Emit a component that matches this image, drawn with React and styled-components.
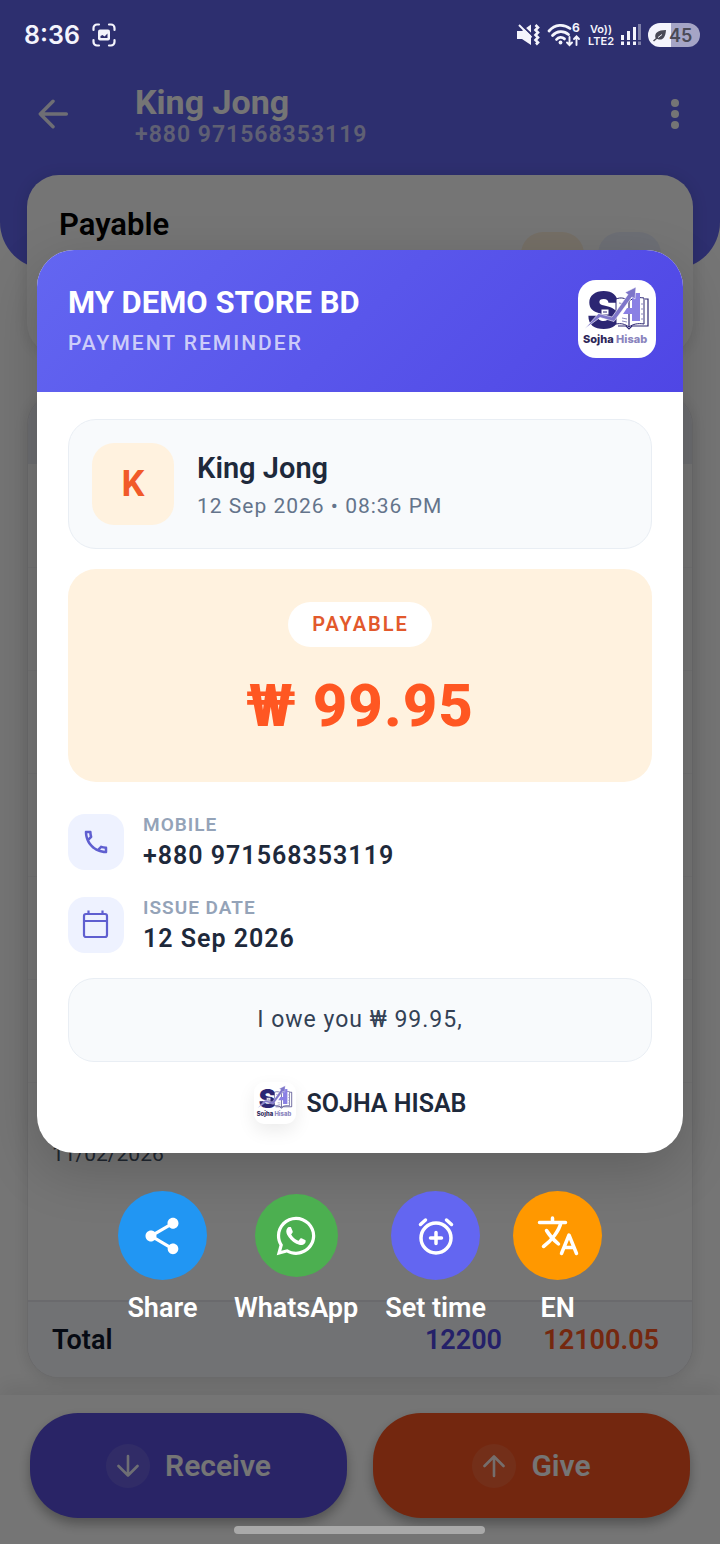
import React from "react"
import styled, { createGlobalStyle } from "styled-components"
import { MdOutlinePhone, MdShare } from "react-icons/md"
import { FaWhatsapp } from "react-icons/fa"

const GlobalStyle = createGlobalStyle`
  * {
    box-sizing: border-box;
  }

  body {
    margin: 0;
    background: #ffffff;
    font-family: Roboto, "Noto Sans", sans-serif;
  }

  button {
    padding: 0;
    border: 0;
    background: none;
    color: inherit;
    font: inherit;
    cursor: pointer;
  }

  svg {
    display: block;
    flex: none;
    overflow: visible;
  }

  h1, h2, p, dl, dd {
    margin: 0;
  }
`

const Screen = styled.div`
  position: relative;
  display: flex;
  flex-direction: column;
  min-height: 100vh;
  overflow: hidden;
`

/* status bar, drawn over the scrim */

const StatusBar = styled.div`
  position: absolute;
  z-index: 3;
  top: 0;
  left: 0;
  right: 0;
  display: flex;
  align-items: center;
  justify-content: space-between;
  height: 70px;
  padding: 0 20px 0 24px;
  color: #f4f4fc;
  font-family: Inter, sans-serif;
`

const StatusGroup = styled.div`
  display: flex;
  align-items: center;
  gap: ${props => props.$gap}px;
`

const Clock = styled.span`
  font-size: 25px;
  font-weight: 600;
`

const Volte = styled.span`
  font-size: 11px;
  font-weight: 600;
  line-height: 12px;
  text-align: center;
`

const Battery = styled.span`
  display: flex;
  align-items: center;
  gap: 2px;
  width: 52px;
  height: 24px;
  padding-left: 5px;
  border-radius: 12px;
  background: linear-gradient(90deg, #f4f4fc 45%, #a5a5c6 45%);
  color: #4a4a56;
  font-size: 18px;
  font-weight: 600;
`

const GestureBar = styled.div`
  position: absolute;
  z-index: 3;
  bottom: 10px;
  left: 50%;
  width: 251px;
  height: 8px;
  margin-left: -126px;
  border-radius: 4px;
  background: #a9a9a9;
`

/* customer page */

const PageHeader = styled.header`
  display: flex;
  align-items: flex-start;
  height: 269px;
  margin-bottom: -94px;
  padding: 84px 30px 0 37px;
  border-radius: 0 0 47px 47px;
  background: #6366f1;
  color: #ffffff;
`

const IconButton = styled.button`
  display: grid;
  place-items: center;
  height: 60px;
`

const HeaderText = styled.div`
  flex: 1;
  margin-left: 66px;
`

const HeaderName = styled.h1`
  font-size: 34px;
  font-weight: 700;
  line-height: 36px;
`

const HeaderPhone = styled.p`
  font-size: 23px;
  font-weight: 600;
  line-height: 30px;
  letter-spacing: 1px;
  opacity: 0.7;
`

const Panel = styled.section`
  position: relative;
  margin: 0 27px;
  border-radius: 32px;
  background: #ffffff;
  box-shadow: 0 2px 16px rgba(0, 0, 0, 0.12);
`

const BalancePanel = styled(Panel)`
  display: flex;
  justify-content: space-between;
  height: 180px;
  margin-bottom: 38px;
  padding: 32px;
`

const BalanceTitle = styled.h2`
  color: #000000;
  font-size: 31px;
  font-weight: 600;
  line-height: 36px;
`

const Tiles = styled.div`
  display: flex;
  gap: 14px;
  padding-top: 25px;
`

const Tile = styled.div`
  width: 63px;
  height: 63px;
  border-radius: 22px;
  background: ${props => props.$color};
`

const LedgerPanel = styled(Panel)`
  flex: 1;
  overflow: hidden;
  margin-bottom: 17px;
  border: 1px solid #e6e6ea;
`

const Ledger = styled.table`
  width: 100%;
  height: 100%;
  border-collapse: collapse;
  color: #475569;
  font-size: 21px;

  thead td {
    height: 70px;
    background: #ecedf4;
  }

  tbody td {
    height: 103px;
    border-bottom: 1px solid #f6f6f8;
    padding: 0 24px;
  }

  tbody tr:last-child td {
    height: 219px;
    padding-top: 56px;
    vertical-align: top;
    line-height: 30px;
  }

  tfoot th,
  tfoot td {
    height: 76px;
    padding: 0 33px 0 24px;
    border-top: 2px solid #e6e8ee;
    background: #f6f8fc;
    font-size: 27px;
    font-weight: 600;
    text-align: right;
  }

  tfoot td + td {
    padding-left: 0;
  }

  tfoot th {
    color: #0f172a;
    text-align: left;
  }
`

const TotalCell = styled.td`
  width: ${props => props.$width}px;
  color: ${props => props.$color};
`

const BottomBar = styled.footer`
  display: flex;
  gap: 26px;
  padding: 18px 30px 26px;
  background: #ffffff;
  box-shadow: 0 -8px 20px rgba(0, 0, 0, 0.08);
`

const BottomButton = styled.button`
  display: flex;
  flex: 1;
  align-items: center;
  justify-content: center;
  gap: 15px;
  height: 105px;
  border-radius: 48px;
  background: ${props => props.$color};
  box-shadow: 0 6px 12px rgba(0, 0, 0, 0.3);
  color: #ffffff;
  font-size: 30px;
  font-weight: 600;
`

const ArrowDisc = styled.span`
  display: grid;
  place-items: center;
  width: 44px;
  height: 44px;
  border-radius: 50%;
  background: rgba(255, 255, 255, 0.1);
`

/* reminder dialog */

const Scrim = styled.div`
  position: absolute;
  z-index: 2;
  inset: 0;
  display: flex;
  flex-direction: column;
  justify-content: center;
  padding: 30px 37px 0;
  background: rgba(0, 0, 0, 0.54);
`

const Dialog = styled.section`
  overflow: hidden;
  margin-bottom: 38px;
  border-radius: 37px;
  background: #ffffff;
  box-shadow: 0 18px 54px rgba(0, 0, 0, 0.18);
`

const DialogHeader = styled.div`
  display: flex;
  justify-content: space-between;
  height: 142px;
  padding: 30px 27px 34px 31px;
  background: linear-gradient(135deg, #6366f1, #4f46e5);
`

const StoreName = styled.h2`
  color: #ffffff;
  font-size: 31px;
  font-weight: 700;
  line-height: 46px;
`

const Subtitle = styled.p`
  color: rgba(255, 255, 255, 0.7);
  font-size: 21px;
  font-weight: 500;
  line-height: 34px;
  letter-spacing: 2px;
`

const LogoBox = styled.span`
  width: ${props => props.$size}px;
  height: ${props => props.$size}px;
  border-radius: ${props => props.$radius}px;
  background: #ffffff;
  box-shadow: ${props => props.$raised ? "0 7px 18px rgba(0, 0, 0, 0.08)" : "none"};
`

const DialogBody = styled.div`
  display: flex;
  flex-direction: column;
  gap: 20px;
  padding: 27px 31px 29px;
`

const Customer = styled.div`
  display: flex;
  align-items: center;
  gap: 23px;
  padding: 23px;
  border: 1px solid #e9eef4;
  border-radius: 28px;
  background: #f8fafc;
`

const Avatar = styled.span`
  display: grid;
  place-items: center;
  width: 82px;
  height: 82px;
  border-radius: 22px;
  background: #fff2df;
  color: #f15a29;
  font-size: 36px;
  font-weight: 700;
`

const CustomerText = styled.div`
  padding-top: 6px;
`

const CustomerName = styled.p`
  color: #1e293b;
  font-size: 29px;
  font-weight: 600;
  line-height: 38px;
`

const CustomerDate = styled.p`
  color: #64748b;
  font-size: 21px;
  line-height: 38px;
  letter-spacing: 1px;
`

const Amount = styled.div`
  display: flex;
  flex-direction: column;
  align-items: center;
  height: 213px;
  padding-top: 33px;
  border-radius: 28px;
  background: #fff2df;
`

const Pill = styled.span`
  padding: 0 23px 0 24px;
  border-radius: 23px;
  background: #ffffff;
  color: #e2592c;
  font-size: 20px;
  font-weight: 600;
  line-height: 45px;
  letter-spacing: 2px;
`

const AmountValue = styled.strong`
  margin-top: 23px;
  color: #ff5722;
  font-size: 60px;
  font-weight: 800;
  line-height: 72px;
  letter-spacing: 1px;
`

const Details = styled.dl`
  display: grid;
  gap: 27px;
  padding: 12px 0 5px;
`

const Detail = styled.div`
  display: flex;
  gap: 19px;
  height: 56px;
`

const DetailIcon = styled.span`
  display: grid;
  place-items: center;
  width: 56px;
  height: 56px;
  border-radius: 17px;
  background: #eef2ff;
  color: #5f5fd0;
`

const DetailLabel = styled.dt`
  color: #94a3b8;
  font-size: 19px;
  font-weight: 600;
  line-height: 22px;
  letter-spacing: 1px;
`

const DetailValue = styled.dd`
  color: #1e293b;
  font-size: 25px;
  font-weight: 600;
  line-height: 40px;
  letter-spacing: 1px;
`

const Note = styled.p`
  border: 1px solid #e9eef4;
  border-radius: 26px;
  background: #f8fafc;
  color: #334155;
  font-size: 23px;
  line-height: 82px;
  letter-spacing: 1px;
  text-align: center;
`

const Brand = styled.div`
  display: flex;
  align-items: center;
  justify-content: center;
  gap: 11px;
  color: #1e293b;
  font-size: 25px;
  font-weight: 600;
`

const Actions = styled.div`
  display: flex;
  justify-content: center;
  gap: 27px;
`

const Action = styled.button`
  display: flex;
  flex-direction: column;
  align-items: center;
  min-width: 89px;
  color: #ffffff;
  font-size: 27px;
  font-weight: 600;
  line-height: 31px;
`

const Disc = styled.span`
  display: grid;
  place-items: center;
  width: ${props => props.$size}px;
  height: ${props => props.$size}px;
  margin: ${props => (89 - props.$size) / 2}px 0;
  border-radius: 50%;
  background: ${props => props.$color};
`

const ActionLabel = styled.span`
  margin-top: 13px;
`

const ArrowIcon = ({ size, turn }) => (
  <svg width={size} height={size} viewBox="0 0 24 24" fill="none" stroke="currentColor" strokeWidth="2.600" strokeLinecap="round" strokeLinejoin="round" opacity="0.9">
    <path transform={`rotate(${turn} 12 12)`} d="M22 12H2.500M12 2.500 2.500 12l9.500 9.500" />
  </svg>
)

const CalendarIcon = () => (
  <svg width="28" height="30" viewBox="0 0 28 30" fill="none" stroke="currentColor" strokeWidth="2.200">
    <rect x="2" y="4" width="23" height="23" rx="2" />
    <path d="M2 11h23M6.500 .5V4M20.500 .5V4" />
  </svg>
)

const AlarmIcon = () => (
  <svg width="40" height="40" viewBox="0 0 40 40" fill="none" stroke="currentColor" strokeWidth="3.500" strokeLinecap="round">
    <circle cx="20" cy="22" r="15" />
    <path d="M20 16.500v11M14.500 22h11M4.500 8.500l5-4.500M35.500 8.500l-5-4.500" />
  </svg>
)

const TranslateIcon = () => (
  <svg width="44" height="42" viewBox="0 0 44 42" fill="none" stroke="currentColor" strokeWidth="3.500" strokeLinecap="round" strokeLinejoin="round">
    <path d="M3.500 7.500h26M16.500 3v4.500M25 7.500C23 16 15.500 25.500 7.500 31.500M10.500 15.500c3 5 7 9.500 12 13.500" />
    <path d="M25.500 38.500 33 20l7.500 18.500M28.500 32.500h9" />
  </svg>
)

const CaptureIcon = () => (
  <svg width="24" height="24" viewBox="0 0 24 24" fill="none" stroke="currentColor" strokeWidth="2.200" strokeLinecap="round">
    <path d="M1.500 7V5a3.500 3.500 0 0 1 3.500-3.500h2M17 1.500h2A3.500 3.500 0 0 1 22.500 5v2M22.500 17v2a3.500 3.500 0 0 1-3.500 3.500h-2M7 22.500H5A3.500 3.500 0 0 1 1.500 19v-2" />
    <rect x="6" y="6.500" width="12" height="11" rx="2" fill="currentColor" stroke="none" />
    <path d="M8.500 15v-2l2-1 2 1.500 3-3V15z" fill="#2e2e6e" stroke="none" />
  </svg>
)

const MuteIcon = () => (
  <svg width="24" height="24" viewBox="0 0 24 24">
    <path d="M1 8h5l9-6.500v20.500L6 16H1z" fill="currentColor" />
    <path d="M5 1.500 17 13" stroke="#2e2e6e" strokeWidth="2" />
    <path d="M3 2 15.500 14.500" stroke="currentColor" strokeWidth="2" />
    <path d="M19.500 2l2.500 2.500-2.500 2.500 2.500 2.500-2.500 2.500 2.500 2.500-2.500 2.500 2.500 2.500-2 2" fill="none" stroke="currentColor" strokeWidth="2.600" />
  </svg>
)

const WifiIcon = () => (
  <svg width="34" height="24" viewBox="0 0 34 24" fill="none" stroke="currentColor" strokeWidth="2.800" strokeLinecap="round">
    <path d="M2 8C8 1 17 .8 23 5.500M5.500 12.500c4.500-5 11.500-5 16-1M9.500 16.500c2-2.500 5.500-2.800 8-.6" />
    <circle cx="13.500" cy="19.500" r="1.900" fill="currentColor" stroke="none" />
    <path d="M22.500 14v8M20 19.500l2.500 2.700 2.500-2.700M29.500 22v-8M27 16l2.500-2.700L32 16" strokeWidth="1.900" />
    <text x="25" y="9" fill="currentColor" stroke="none" fontSize="12" fontWeight="700">6</text>
  </svg>
)

const SignalIcon = () => (
  <svg width="20" height="24" viewBox="0 0 20 24" stroke="currentColor" strokeWidth="3">
    <path d="M1.500 12v5M7.500 8v9M13.500 4v13" />
    <path d="M1.500 18.500V22M7.500 18.500V22M13.500 18.500V22" />
    <path d="M18.500 1v16M18.500 18.500V22" opacity="0.4" />
  </svg>
)

const LeafIcon = () => (
  <svg width="14" height="14" viewBox="0 0 14 14">
    <path d="M2.500 10C1 5 5 2 13 2c-.5 8-4 11-8.500 9z" fill="currentColor" />
    <path d="M5 9.500 9 6.500" stroke="#f4f4fc" strokeWidth="1" />
    <path d="M.5 13 4 10" stroke="currentColor" strokeWidth="1.500" />
  </svg>
)

const Logo = ({ size }) => (
  <svg width={size} height={size} viewBox="0 0 78 78" fill="none" fontFamily="Inter, sans-serif">
    <text x="9" y="48" fill="#2c2673" fontSize="49" fontWeight="900">S</text>
    <path d="M38 19c5-2 9-1 13 2 4-3 9-4 15-3v26c-6-1-11 0-15 3-4-3-8-4-13-3z" fill="#ffffff" stroke="#2c2673" strokeWidth="1" />
    <path d="M67 19h3v27H54l-3 3-3-3h-8M51 21v26" stroke="#2c2673" strokeWidth="1.200" />
    <path d="M41 23l6 1M44 38l5 1M44 41l5 1M64 23v2M64 28v2M64 33v2M64 38v2" stroke="#8d8ac0" strokeWidth="1" />
    <path d="M23 29h8v6h-8z" fill="#ffffff" stroke="#2c2673" strokeWidth="1" />
    <path d="M25 32h4" stroke="#2c2673" strokeWidth="1" />
    <path d="M54 13h8v28h-8v-7h-9l4-6h5z" fill="#8a80e4" />
    <path d="M7 48.500 20.500 33.500 34 37 50 14.500l-3-2L58 7l-1 12-3-2-18 24.500L22 37.500z" fill="#7e76c9" stroke="#ffffff" strokeWidth="0.600" />
    <text x="5" y="63" fontSize="11" fontWeight="800">
      <tspan fill="#2c2558">Sojha </tspan>
      <tspan fill="#8a84bd">Hisab</tspan>
    </text>
  </svg>
)

const blankRows = [1, 2, 3, 4, 5, 6]

const CustomerPage = () => (
  <>
    <PageHeader>
      <IconButton aria-label="Back">
        <ArrowIcon size={32} turn={0} />
      </IconButton>
      <HeaderText>
        <HeaderName>King Jong</HeaderName>
        <HeaderPhone>+880 971568353119</HeaderPhone>
      </HeaderText>
      <IconButton aria-label="More">
        <svg width="30" height="32" viewBox="0 0 30 32" fill="currentColor">
          <circle cx="15" cy="5" r="4" />
          <circle cx="15" cy="16" r="4" />
          <circle cx="15" cy="27" r="4" />
        </svg>
      </IconButton>
    </PageHeader>

    <BalancePanel>
      <BalanceTitle>Payable</BalanceTitle>
      <Tiles>
        <Tile $color="#fff1de" />
        <Tile $color="#eef2ff" />
      </Tiles>
    </BalancePanel>

    <LedgerPanel>
      <Ledger>
        <thead>
          <tr><td colSpan="3" /></tr>
        </thead>
        <tbody>
          {blankRows.map(row => (
            <tr key={row}><td colSpan="3" /></tr>
          ))}
          <tr><td colSpan="3">11/02/2026</td></tr>
        </tbody>
        <tfoot>
          <tr>
            <th scope="row">Total</th>
            <TotalCell $width={160} $color="#4f46e5">12200</TotalCell>
            <TotalCell $width={157} $color="#ff5722">12100.05</TotalCell>
          </tr>
        </tfoot>
      </Ledger>
    </LedgerPanel>

    <BottomBar>
      <BottomButton $color="#5b50de">
        <ArrowDisc><ArrowIcon size={24} turn={-90} /></ArrowDisc>
        Receive
      </BottomButton>
      <BottomButton $color="#fb5622">
        <ArrowDisc><ArrowIcon size={24} turn={90} /></ArrowDisc>
        Give
      </BottomButton>
    </BottomBar>
  </>
)

const Reminder = () => (
  <Dialog role="dialog" aria-label="Payment reminder">
    <DialogHeader>
      <div>
        <StoreName>MY DEMO STORE BD</StoreName>
        <Subtitle>PAYMENT REMINDER</Subtitle>
      </div>
      <LogoBox $size={78} $radius={18}><Logo size={78} /></LogoBox>
    </DialogHeader>

    <DialogBody>
      <Customer>
        <Avatar>K</Avatar>
        <CustomerText>
          <CustomerName>King Jong</CustomerName>
          <CustomerDate>12 Sep 2026 • 08:36 PM</CustomerDate>
        </CustomerText>
      </Customer>

      <Amount>
        <Pill>PAYABLE</Pill>
        <AmountValue>₩ 99.95</AmountValue>
      </Amount>

      <Details>
        <Detail>
          <DetailIcon><MdOutlinePhone size={30} /></DetailIcon>
          <div>
            <DetailLabel>MOBILE</DetailLabel>
            <DetailValue>+880 971568353119</DetailValue>
          </div>
        </Detail>
        <Detail>
          <DetailIcon><CalendarIcon /></DetailIcon>
          <div>
            <DetailLabel>ISSUE DATE</DetailLabel>
            <DetailValue>12 Sep 2026</DetailValue>
          </div>
        </Detail>
      </Details>

      <Note>I owe you ₩ 99.95,</Note>

      <Brand>
        <LogoBox $size={42} $radius={10} $raised><Logo size={42} /></LogoBox>
        SOJHA HISAB
      </Brand>
    </DialogBody>
  </Dialog>
)

const App = () => (
  <>
    <GlobalStyle />
    <Screen>
      <StatusBar>
        <StatusGroup $gap={12}>
          <Clock>8:36</Clock>
          <CaptureIcon />
        </StatusGroup>
        <StatusGroup $gap={7}>
          <MuteIcon />
          <WifiIcon />
          <Volte>Vo))<br />LTE2</Volte>
          <SignalIcon />
          <Battery><LeafIcon />45</Battery>
        </StatusGroup>
      </StatusBar>

      <CustomerPage />

      <Scrim>
        <Reminder />
        <Actions>
          <Action>
            <Disc $size={89} $color="#2196f3"><MdShare size={44} /></Disc>
            <ActionLabel>Share</ActionLabel>
          </Action>
          <Action>
            <Disc $size={83} $color="#4caf50"><FaWhatsapp size={44} /></Disc>
            <ActionLabel>WhatsApp</ActionLabel>
          </Action>
          <Action>
            <Disc $size={89} $color="#6366f1"><AlarmIcon /></Disc>
            <ActionLabel>Set time</ActionLabel>
          </Action>
          <Action>
            <Disc $size={89} $color="#ff9800"><TranslateIcon /></Disc>
            <ActionLabel>EN</ActionLabel>
          </Action>
        </Actions>
      </Scrim>

      <GestureBar />
    </Screen>
  </>
)

export default App
